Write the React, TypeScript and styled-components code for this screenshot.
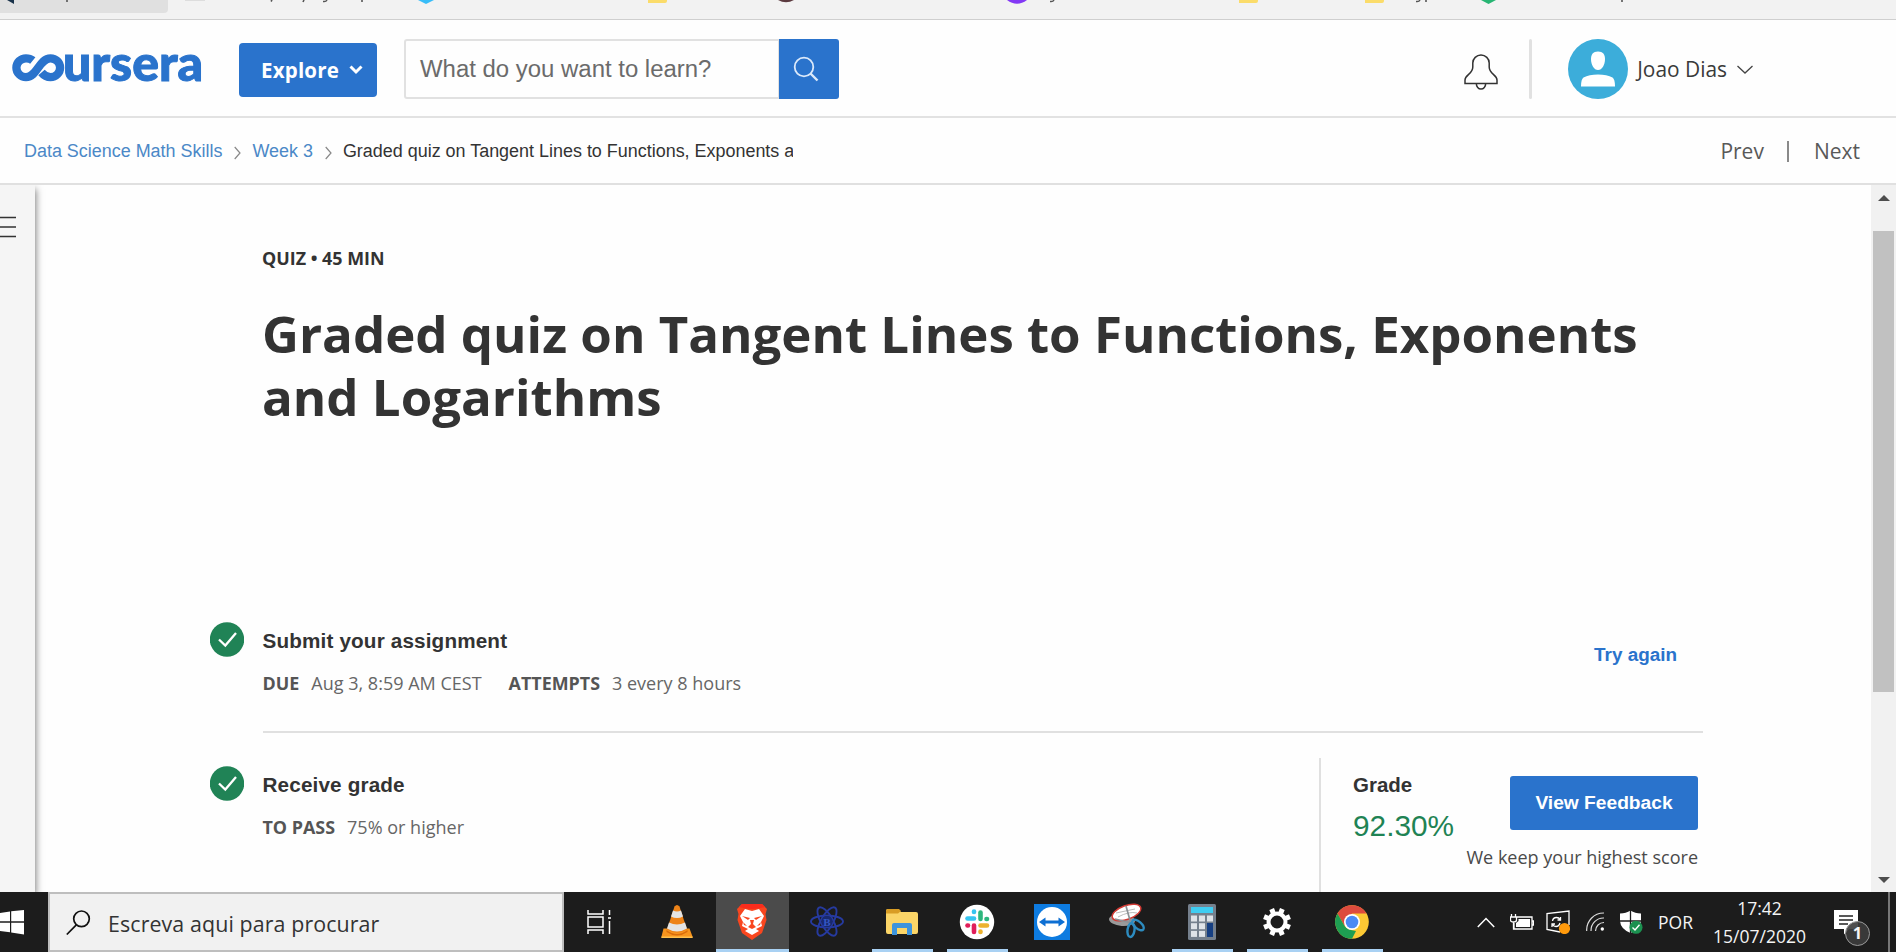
import React from "react";
import styled, { createGlobalStyle } from "styled-components";

const arial = '"Liberation Sans", Arial, sans-serif';
const open = '"Open Sans", "Noto Sans", sans-serif';
const blue = "#2a73cc";

const Global = createGlobalStyle`
  * { box-sizing: border-box; }
  body { margin: 0; background: #fff; overflow: hidden; }
  svg { display: block; flex: none; }
`;

const Screen = styled.div`
  width: 1896px;
  height: 952px;
  display: flex;
  flex-direction: column;
  background: #fefefe;
  overflow: hidden;
`;

/* Browser bookmarks */
const Bookmarks = styled.div`
  height: 20px;
  flex: none;
  background: #f2f2f2;
  border-bottom: 1px solid #cfcfcf;
`;

/* Site header */
const Header = styled.header`
  height: 98px;
  flex: none;
  display: flex;
  align-items: center;
  border-bottom: 2px solid #e2e2e2;
  padding: 2px 143px 0 12px;
`;
const Logo = styled.a`
  display: flex;
  width: 193px;
  margin-right: 34px;
  margin-top: -2px;
`;
const ExploreButton = styled.button`
  width: 138px;
  height: 54px;
  margin-top: 2px;
  border: 0;
  border-radius: 4px;
  background: ${blue};
  color: #fff;
  font: 700 20.5px ${open};
  letter-spacing: 0.2px;
  display: flex;
  align-items: center;
  justify-content: space-between;
  padding: 0 14px 0 22px;
`;
const Search = styled.form`
  display: flex;
  width: 435px;
  height: 60px;
  margin-left: 27px;
`;
const SearchField = styled.div`
  flex: 1;
  border: 2px solid #e1e1e1;
  border-right-width: 1px;
  border-radius: 3px 0 0 3px;
  display: flex;
  align-items: center;
  padding-left: 14px;
  font: 23.95px ${arial};
  color: #6b6b6b;
`;
const SearchButton = styled.button`
  width: 60px;
  border: 0;
  border-radius: 0 3px 3px 0;
  background: ${blue};
  padding: 0 0 0 14px;
`;
const HeaderRight = styled.div`
  display: flex;
  align-items: center;
  margin-left: auto;
`;
const HeaderRule = styled.div`
  width: 3px;
  height: 60px;
  border-radius: 2px;
  background: #e1e1e1;
  margin: 0 36px 0 31px;
`;
const UserName = styled.span`
  font: 20.9px ${open};
  color: #3a3a3a;
  margin: 0 10px 0 9px;
  white-space: nowrap;
`;

/* Breadcrumb bar */
const CrumbBar = styled.nav`
  height: 67px;
  flex: none;
  display: flex;
  align-items: center;
  border-bottom: 2px solid #e0e0e0;
  padding: 2px 36px 0 24px;
  font: 17.95px ${arial};
  white-space: nowrap;
`;
const CrumbLink = styled.a`
  color: #4b88c7;
`;
const CrumbArrow = styled.svg`
  margin: 3px 11px 0 12px;
`;
const CrumbCurrent = styled.span`
  width: 450px;
  overflow: hidden;
  color: #333;
`;
const Pager = styled.div`
  margin: -2px 0 0 auto;
  display: flex;
  align-items: center;
  font: 21px ${open};
  color: #595959;
`;
const PagerRule = styled.i`
  width: 2px;
  height: 21px;
  margin: 2px 25px 0 23px;
  background: #8a8a8a;
`;

/* Page body */
const Body = styled.div`
  flex: 1;
  min-height: 0;
  display: flex;
`;
const SideRail = styled.aside`
  width: 35px;
  background: #f5f5f5;
  box-shadow: 1px 4px 7px rgba(0, 0, 0, 0.5);
  clip-path: inset(0 -12px 0 0);
  padding-top: 31px;
`;
const Content = styled.main`
  flex: 1;
  min-width: 0;
  padding: 61px 0 0 228px;
  color: #333;
  overflow: hidden;
`;
const Kind = styled.div`
  margin-left: -1px;
  font: 700 17.9px/24px ${open};
`;
const Title = styled.h1`
  width: 1440px;
  margin: 32px 0 0 -1px;
  font: 700 51px/63px ${open};
`;
const Steps = styled.section`
  width: 1493px;
  margin: 194px 0 0 -53px;
`;
const Step = styled.div<{ $offset?: number }>`
  display: flex;
  padding-top: ${(p) => p.$offset ?? 0}px;
`;
const StepIcon = styled.svg`
  margin-right: 19px;
`;
const StepMain = styled.div<{ $ruled?: boolean }>`
  flex: 1;
  display: flex;
  justify-content: space-between;
  height: ${(p) => (p.$ruled ? "111px" : "126px")};
  border-bottom: ${(p) => (p.$ruled ? "2px solid #e0e0e0" : "0")};
`;
const StepText = styled.div`
  padding-top: 7px;
  margin-left: -0.5px;
`;
const StepTitle = styled.h2`
  margin: 0 0 18px;
  font: 700 20.7px/24px ${arial};
  letter-spacing: 0.15px;
`;
const Meta = styled.div`
  display: flex;
  font: 18.02px/24px ${open};
  color: #666;
  white-space: nowrap;
`;
const MetaLabel = styled.b`
  font-size: 17.9px;
  color: #555;
  margin-right: 12px;
`;
const MetaValue = styled.span`
  margin-right: 27px;
`;
const TryAgain = styled.a`
  margin: 21px 26px 0 0;
  font: 700 18.9px/24px ${arial};
  color: ${blue};
`;
const GradePanel = styled.div`
  display: flex;
  width: 384px;
  margin-top: -8px;
  padding: 0 5px 0 32px;
  border-left: 2px solid #e0e0e0;
`;
const GradeBlock = styled.div`
  padding-top: 15px;
  width: 113px;
`;
const GradeTitle = styled.div`
  font: 700 20.5px/24px ${arial};
`;
const GradeValue = styled.div`
  font: 29.8px/36px ${arial};
  color: #1f8354;
  margin-top: 11px;
`;
const FeedbackBlock = styled.div`
  flex: 1;
  display: flex;
  flex-direction: column;
  align-items: flex-end;
  padding-top: 18px;
`;
const FeedbackButton = styled.button`
  width: 188px;
  height: 54px;
  padding: 0;
  border: 0;
  border-radius: 3px;
  background: ${blue};
  color: #fff;
  font: 700 19.2px ${arial};
`;
const FeedbackNote = styled.div`
  margin-top: 15px;
  font: 18.02px/24px ${open};
  color: #4a4a4a;
  white-space: nowrap;
`;
const Scrollbar = styled.div`
  width: 25px;
  background: #f1f1f1;
  display: flex;
  flex-direction: column;
  align-items: center;
  padding: 10px 0 9px;
`;
const ScrollThumb = styled.div`
  width: 21px;
  height: 461px;
  margin: 30px 0 auto;
  background: #c1c1c1;
`;

/* Desktop taskbar */
const Taskbar = styled.footer`
  height: 60px;
  flex: none;
  display: flex;
  background: #1c1c1c;
  color: #f4f4f4;
  font-family: ${open};
`;
const StartButton = styled.div`
  width: 48px;
  padding-top: 18px;
`;
const TaskSearch = styled.div`
  width: 516px;
  background: #f1f1f1;
  border: 2px solid #bebebe;
  display: flex;
  padding: 16px 0 0 16px;
`;
const TaskSearchText = styled.span`
  margin: 0 0 0 17px;
  font-size: 21.4px;
  line-height: 28px;
  letter-spacing: 0.1px;
  color: #333;
`;
const Apps = styled.div`
  display: flex;
  gap: 2px;
  padding-left: 2px;
`;
const AppSlot = styled.div<{ $open?: boolean; $active?: boolean }>`
  width: 73px;
  display: flex;
  flex-direction: column;
  align-items: center;
  justify-content: space-between;
  background: ${(p) => (p.$active ? "#4b4b4b" : "transparent")};
  svg { margin-right: 2px; }
  &::after {
    content: "";
    height: 3px;
    width: ${(p) => (p.$active ? 73 : 61)}px;
    background: ${(p) => (p.$open || p.$active ? "#a9d1f3" : "transparent")};
  }
`;
const Tray = styled.div`
  margin-left: auto;
  display: flex;
  align-items: center;
`;
const TrayIcon = styled.svg<{ $gap: number }>`
  margin-right: ${(p) => p.$gap}px;
`;
const Language = styled.span`
  width: 35px;
  font-size: 17.5px;
  margin-right: 20px;
`;
const Clock = styled.div`
  width: 93px;
  margin-right: 28px;
  text-align: center;
  font-size: 17.5px;
  line-height: 28px;
  white-space: nowrap;
`;
const Notifications = styled.div`
  position: relative;
  width: 39px;
  height: 60px;
  padding-top: 18px;
  margin-right: 15px;
`;
const Badge = styled.span`
  position: absolute;
  left: 11px;
  top: 29px;
  width: 25px;
  height: 25px;
  border: 1.5px solid #999;
  border-radius: 50%;
  background: #3d3d3de8;
  font: 700 16.5px/21px ${open};
  text-align: center;
`;
const ShowDesktop = styled.div`
  width: 8px;
  height: 60px;
  border-left: 2px solid #777;
`;

const BookmarkRemnants = () => (
  <svg width="1896" height="19" viewBox="0 0 1896 19">
    <path d="M0 0H168V9Q168 13 164 13H0Z" fill="#e0e0e0" />
    <path d="M7 0L14 4V0Z" fill="#19324a" />
    <path d="M185 0H205" stroke="#ddd" strokeWidth="2" />
    <path d="M67 0V2M272 0L271 1.5M304 0L303 2M362 0V2M1426 0V2M1622 0V2" stroke="#555" strokeWidth="1.6" />
    <path d="M323 1.5Q326 2 327 0M1050 1.5Q1053 2 1054 0M1416 1.5Q1419 2 1420 0" stroke="#555" strokeWidth="1.5" fill="none" />
    <path d="M418 0L426 4L434 0Z" fill="#38bdf8" />
    <path d="M648 0H667V1Q667 3 665 3H648ZM1239 0H1258V1Q1258 3 1256 3H1239ZM1365 0H1384V1Q1384 3 1382 3H1365Z" fill="#fbdc6a" />
    <path d="M778 0Q786 4.5 794 0Z" fill="#5c3b40" />
    <path d="M1007 0Q1017 7.5 1027 0Z" fill="#8338f5" />
    <path d="M1481 0L1488.500 4L1496 0Z" fill="#27b573" />
  </svg>
);

const CourseraLogo = () => (
  <svg width="193" height="44" viewBox="0 0 193 44" role="img" aria-label="coursera">
    <path
      d="M20.800 14.600C18.700 12.900 16.600 12.300 14 12.300A9.600 9.400 0 0 0 14 31.100C25.500 31.100 27 12.300 38.500 12.300A9.600 9.400 0 0 1 38.500 31.100C34.500 31.100 32 29.500 29.500 26.500"
      fill="none"
      stroke={blue}
      strokeWidth="8.300"
    />
    <text x="51" y="34.500" textLength="140" lengthAdjust="spacingAndGlyphs" fill={blue} stroke={blue} strokeWidth="1" fontFamily="Lato" fontWeight="900" fontSize="48.500">
      ursera
    </text>
  </svg>
);

const Check = () => (
  <StepIcon width="34" height="36" viewBox="0 0 34 36">
    <circle cx="17" cy="17.500" r="17.200" fill="#208356" />
    <path d="M9 17.500L15.300 23.500L26 11" fill="none" stroke="#fff" strokeWidth="2.300" />
  </StepIcon>
);

const Arrow = () => (
  <CrumbArrow width="7" height="14" viewBox="0 0 7 14">
    <path d="M0.700 1L6 7L0.700 13" fill="none" stroke="#888" strokeWidth="1.200" />
  </CrumbArrow>
);

const Vlc = () => (
  <>
    <path d="M9 31.500H35L38 39.500V41H7V39.500Z" transform="translate(7.500 -1)" fill="#f7941d" />
    <path d="M7 40.500H38V42H7Z" transform="translate(7.500 -2)" fill="#ffc04d" />
    <path d="M20 31.500Q30 38 40 31.500L32.500 8.500Q30 5.500 27.500 8.500Z" fill="#ee8318" />
    <path d="M26 13.500Q30 15.500 34 13.500L36 19.500Q30 22.500 24 19.500ZM22 25.500Q30 29.500 38 25.500L40 31.500Q30 37.500 20 31.500Z" transform="translate(0 -1)" fill="#e4e4e4" />
    <path d="M19.500 32Q30 40 40.500 32V34Q30 41 19.500 34Z" fill="#d96c0b" />
  </>
);

const Brave = () => (
  <>
    <path d="M20 5H40L45 10L43.500 15L44.500 21L40 34L30 41L20 34L15.500 21L16.500 15L15 10Z" fill="#f9461f" />
    <path d="M20 5H40L43 8Q36 10 30 10T17 8Z" fill="#fb2c1c" />
    <path d="M23 10L30 12L37 10L42 17L39 23L40 27L34 30L37 32L30 36L23 32L26 30L20 27L21 23L18 17Z" fill="#fff" />
    <path d="M20 17L28 19L26 21ZM40 17L32 19L34 21ZM28 21H32L31 25L34 28L30 30L26 28L29 25ZM21 23L25 27L22 26ZM39 23L35 27L38 26Z" fill="#f9461f" />
  </>
);

const Atom = () => (
  <g fill="none" stroke="#263a9f" strokeWidth="1.900">
    <ellipse cx="30" cy="29.500" rx="16" ry="6" />
    <ellipse cx="30" cy="29.500" rx="16" ry="6" transform="rotate(60 30 29.500)" />
    <ellipse cx="30" cy="29.500" rx="16" ry="6" transform="rotate(120 30 29.500)" />
    <circle cx="30" cy="29.500" r="5.500" fill="#19296f" stroke="none" />
    <text x="30" y="33.500" textAnchor="middle" fontFamily="Liberation Serif" fontWeight="700" fontSize="11" fill="#3457c4" stroke="none">B</text>
  </g>
);

const Folder = () => (
  <>
    <path d="M14 19Q14 17 16 17H26L29 20H44Q46 20 46 22V40Q46 42 44 42H16Q14 42 14 40Z" fill="#fbd567" />
    <path d="M14 19Q14 17 16 17H27L29 19L26 21.500H14Z" fill="#d99d24" />
    <path d="M20 43V33Q20 31 22 31H38Q40 31 40 33V43H35V36H25V43Z" fill="#3d94dd" />
  </>
);

const Slack = () => (
  <>
    <circle cx="30" cy="30" r="17.200" fill="#fff" />
    <g strokeWidth="4.600" strokeLinecap="round">
      <path d="M20.500 26.500H27" stroke="#36c5f0" />
      <path d="M27 19.500V20" stroke="#36c5f0" />
      <path d="M33.500 20.500V27" stroke="#2eb67d" />
      <path d="M40 27H39.500" stroke="#2eb67d" />
      <path d="M33.500 33.500H40" stroke="#ecb22e" />
      <path d="M33.500 40V39.500" stroke="#ecb22e" />
      <path d="M27 33.500V40" stroke="#e01e5a" />
      <path d="M20.500 33.500H21" stroke="#e01e5a" />
    </g>
  </>
);

const TeamViewer = () => (
  <>
    <rect x="12" y="12" width="36" height="36" fill="#0d7be0" />
    <circle cx="30" cy="30" r="15" fill="#fff" />
    <path d="M17 30L23.500 25.500V28.500H36.500V25.500L43 30L36.500 34.500V31.500H23.500V34.500Z" fill="#0d6fd3" />
  </>
);

const Snip = () => (
  <>
    <ellipse cx="25" cy="28" rx="13" ry="6" transform="rotate(4 25 28)" fill="#9a9a9a" />
    <ellipse cx="29.500" cy="20.500" rx="15" ry="7" transform="rotate(-20 29.500 20.500)" fill="#fff" stroke="#d23b35" strokeWidth="1.500" />
    <path d="M19 21L38 17M21 25Q32 19 40 21" stroke="#bbb" fill="none" />
    <path d="M29 14L34 32M18 27L35 31" stroke="#8c9296" strokeWidth="1.700" />
    <ellipse cx="34" cy="38" rx="3.500" ry="7" transform="rotate(8 34 38)" fill="none" stroke="#2d8cc0" strokeWidth="2.400" />
    <ellipse cx="41" cy="33" rx="3.500" ry="7" transform="rotate(-50 41 33)" fill="none" stroke="#2d8cc0" strokeWidth="2.400" />
  </>
);

const Calculator = () => (
  <>
    <rect x="16" y="12" width="28" height="36" rx="1.500" fill="#75808d" />
    <rect x="19" y="15" width="22" height="6" fill="#3fcdf2" />
    {[0, 1, 2].map((r) =>
      [0, 1, 2].map((c) => (
        <rect key={`${r}${c}`} x={19 + c * 8} y={23.5 + r * 7.7} width="6" height="6" fill={c === 2 && r > 0 ? "#163f82" : "#dfe3e8"} />
      ))
    )}
    <rect x="35" y="31" width="6" height="14" fill="#163f82" />
  </>
);

const Gear = () => (
  <g fill="none" stroke="#fff">
    <circle cx="30" cy="30" r="8.500" strokeWidth="4" />
    {[22.5, 67.5, 112.5, 157.5, 202.5, 247.5, 292.5, 337.5].map((a) => (
      <path key={a} d="M30 21V16" strokeWidth="5" transform={`rotate(${a} 30 30)`} />
    ))}
  </g>
);

const Chrome = () => (
  <>
    <circle cx="30" cy="30" r="16.800" fill="#fcc934" />
    <path d="M15.450 21.600A16.800 16.800 0 0 1 44.550 21.600H30L22.500 34Z" fill="#dd4b3e" />
    <path d="M15.450 21.600L22.600 34Q26 38 30 38.200L34 39L30 46.800A16.800 16.800 0 0 1 15.450 21.600Z" fill="#1e9e52" />
    <circle cx="30" cy="30" r="8" fill="#fff" />
    <circle cx="30" cy="30" r="6.300" fill="#4a8af4" />
  </>
);

const TaskView = () => (
  <path d="M16 18V22H31V18M16 42V38H31V42M16 25H31V35H16ZM37.500 18V23M37.500 29V42M36 26H39" fill="none" stroke="#fff" strokeWidth="1.500" />
);

const apps: { name: string; Icon: () => React.JSX.Element; open?: boolean; active?: boolean; lift?: number }[] = [
  { name: "task view", Icon: TaskView },
  { name: "vlc", Icon: Vlc, lift: 6 },
  { name: "brave", Icon: Brave, active: true, lift: 7 },
  { name: "atom", Icon: Atom },
  { name: "files", Icon: Folder, open: true },
  { name: "slack", Icon: Slack, open: true },
  { name: "teamviewer", Icon: TeamViewer },
  { name: "snip", Icon: Snip },
  { name: "calculator", Icon: Calculator, open: true },
  { name: "settings", Icon: Gear, open: true },
  { name: "chrome", Icon: Chrome, open: true },
];

export default function App() {
  return (
    <Screen>
      <Global />
      <Bookmarks>
        <BookmarkRemnants />
      </Bookmarks>

      <Header>
        <Logo>
          <CourseraLogo />
        </Logo>
        <ExploreButton>
          Explore
          <svg width="14" height="10" viewBox="0 0 14 10">
            <path d="M1.500 1.500L7 7L12.500 1.500" fill="none" stroke="#fff" strokeWidth="3" />
          </svg>
        </ExploreButton>
        <Search>
          <SearchField>What do you want to learn?</SearchField>
          <SearchButton type="button">
            <svg width="26" height="26" viewBox="0 0 26 26">
              <circle cx="11" cy="11" r="9.300" fill="none" stroke="#dbe9fa" strokeWidth="1.800" />
              <path d="M17.500 17.500L24.500 24.500" stroke="#dbe9fa" strokeWidth="2.400" />
            </svg>
          </SearchButton>
        </Search>
        <HeaderRight>
          <svg width="34" height="43" viewBox="0 0 34 43">
            <path
              transform="translate(0 6)"
              d="M1 29.500V26C1 21 8.800 20 8.800 13V9A8.200 8 0 0 1 25.200 9V13C25.200 20 33 21 33 26V29.500ZM12.300 29.500A4.700 5.500 0 0 0 21.700 29.500"
              fill="none"
              stroke="#333"
              strokeWidth="1.500"
            />
          </svg>
          <HeaderRule />
          <svg width="60" height="60" viewBox="0 0 60 60">
            <circle cx="30" cy="30" r="30" fill="#3cadda" />
            <path d="M30 12.500C25 12.500 23 15.500 23 20C23 26 26 31 30 31S37 26 37 20C37 15.500 35 12.500 30 12.500Z" fill="#fff" />
            <path d="M13 47.500Q13 40 15.500 38.500Q21 35.500 30 35.500T44.500 38.500Q47 40 47 47.500Z" fill="#fff" />
          </svg>
          <UserName>Joao Dias</UserName>
          <svg width="16" height="9" viewBox="0 0 16 9">
            <path d="M0.500 1L8 8L15.500 1" fill="none" stroke="#444" strokeWidth="1.300" />
          </svg>
        </HeaderRight>
      </Header>

      <CrumbBar>
        <CrumbLink>Data Science Math Skills</CrumbLink>
        <Arrow />
        <CrumbLink>Week 3</CrumbLink>
        <Arrow />
        <CrumbCurrent>Graded quiz on Tangent Lines to Functions, Exponents and Logarithms</CrumbCurrent>
        <Pager>
          <span>Prev</span>
          <PagerRule />
          <span>Next</span>
        </Pager>
      </CrumbBar>

      <Body>
        <SideRail>
          <svg width="16" height="22" viewBox="0 0 16 22">
            <path d="M0 1.500H16M0 11H16M0 20.500H16" stroke="#333" strokeWidth="1.500" />
          </svg>
        </SideRail>
        <Content>
          <Kind>QUIZ • 45 MIN</Kind>
          <Title>Graded quiz on Tangent Lines to Functions, Exponents and Logarithms</Title>
          <Steps>
            <Step>
              <Check />
              <StepMain $ruled>
                <StepText>
                  <StepTitle>Submit your assignment</StepTitle>
                  <Meta>
                    <MetaLabel>DUE</MetaLabel>
                    <MetaValue>Aug 3, 8:59 AM CEST</MetaValue>
                    <MetaLabel>ATTEMPTS</MetaLabel>
                    <MetaValue>3 every 8 hours</MetaValue>
                  </Meta>
                </StepText>
                <TryAgain>Try again</TryAgain>
              </StepMain>
            </Step>
            <Step $offset={33}>
              <Check />
              <StepMain>
                <StepText>
                  <StepTitle>Receive grade</StepTitle>
                  <Meta>
                    <MetaLabel>TO PASS</MetaLabel>
                    <MetaValue>75% or higher</MetaValue>
                  </Meta>
                </StepText>
                <GradePanel>
                  <GradeBlock>
                    <GradeTitle>Grade</GradeTitle>
                    <GradeValue>92.30%</GradeValue>
                  </GradeBlock>
                  <FeedbackBlock>
                    <FeedbackButton>View Feedback</FeedbackButton>
                    <FeedbackNote>We keep your highest score</FeedbackNote>
                  </FeedbackBlock>
                </GradePanel>
              </StepMain>
            </Step>
          </Steps>
        </Content>
        <Scrollbar>
          <svg width="12" height="6" viewBox="0 0 12 6">
            <path d="M0 6L6 0L12 6Z" fill="#4d4d4d" />
          </svg>
          <ScrollThumb />
          <svg width="12" height="6" viewBox="0 0 12 6">
            <path d="M0 0L6 6L12 0Z" fill="#4d4d4d" />
          </svg>
        </Scrollbar>
      </Body>

      <Taskbar>
        <StartButton>
          <svg width="25" height="25" viewBox="0 0 25 25">
            <path d="M0 3L10 1.500V11.300H0ZM11.200 1.300L24 0V11.300H11.200ZM0 12.700H10V22.300L0 21ZM11.200 12.700H24V24.500L11.200 22.500Z" fill="#fff" />
          </svg>
        </StartButton>
        <TaskSearch>
          <svg width="25" height="26" viewBox="0 0 25 26">
            <circle cx="15.500" cy="8.800" r="7.800" fill="none" stroke="#111" strokeWidth="1.700" />
            <path d="M10.300 14.800L0.800 24.500" stroke="#111" strokeWidth="1.700" />
          </svg>
          <TaskSearchText>Escreva aqui para procurar</TaskSearchText>
        </TaskSearch>
        <Apps>
          {apps.map(({ name, Icon, open: isOpen, active, lift = 0 }) => (
            <AppSlot key={name} $open={isOpen} $active={active}>
              <svg width="60" height="57" viewBox={`0 ${-lift} 60 57`}>
                <Icon />
              </svg>
            </AppSlot>
          ))}
        </Apps>
        <Tray>
          <TrayIcon $gap={15} width="18" height="11" viewBox="0 0 18 11">
            <path d="M0.800 10L9 1.500L17.200 10" fill="none" stroke="#fff" strokeWidth="1.500" />
          </TrayIcon>
          <TrayIcon $gap={12} width="24" height="18" viewBox="0 0 24 18">
            <path d="M6 4H22V16H4V10M22 8H23.500V12H22M1.500 1V4M5.500 1V4M0.500 4H6.500V7Q6.500 9 3.500 9T0.500 7ZM3.500 9V16H6" fill="none" stroke="#fff" strokeWidth="1.300" />
            <path d="M8.500 6H20V14H6V10L8.500 8Z" fill="#fff" />
          </TrayIcon>
          <TrayIcon $gap={16} width="24" height="24" viewBox="0 0 24 24">
            <path d="M14 22L1 19.500V3.500L23 1V15" fill="none" stroke="#fff" strokeWidth="1.300" />
            <path d="M6.500 11Q7 7.500 10.500 7.500Q13 7.500 14 9.500M14.500 7V10H11.500M14 13Q13 16.500 10 16.500Q7.500 16.500 6.500 14.500M6 17V14H9" fill="none" stroke="#fff" strokeWidth="1.300" />
            <circle cx="18.500" cy="18.500" r="5.600" fill="#ff9a0c" />
          </TrayIcon>
          <TrayIcon $gap={14} width="19" height="20" viewBox="0 0 19 20">
            <g fill="none" stroke="#ddd" strokeWidth="1.200">
              <path d="M0.700 19A17 17 0 0 1 18 1" />
              <path d="M5 19A12.500 12.500 0 0 1 18 6" />
              <path d="M9.500 19A8.500 8.500 0 0 1 18 10.500" />
            </g>
            <circle cx="16.300" cy="17" r="1.700" fill="#fff" />
          </TrayIcon>
          <TrayIcon $gap={15} width="24" height="24" viewBox="0 0 24 24">
            <path d="M11.500 0.500Q16 3.500 22 3.500V11Q21.500 19 11.500 23Q1.500 19 1 11V3.500Q7 3.500 11.500 0.500Z" fill="#fff" />
            <path d="M11.500 0V23M0 11H22" stroke="#1c1c1c" strokeWidth="1.300" />
            <circle cx="17" cy="17.300" r="6.500" fill="#1b9150" />
            <path d="M13.500 17.500L16 20L20.500 14.800" fill="none" stroke="#fff" strokeWidth="1.400" />
          </TrayIcon>
          <Language>POR</Language>
          <Clock>
            17:42
            <br />
            15/07/2020
          </Clock>
          <Notifications>
            <svg width="25" height="26" viewBox="0 0 25 26">
              <path d="M0 0H24V19H15L10 24.500V19H0Z" fill="#fff" />
              <path d="M5 6H19M5 10H19M5 14H14" stroke="#222" strokeWidth="1.300" />
            </svg>
            <Badge>1</Badge>
          </Notifications>
          <ShowDesktop />
        </Tray>
      </Taskbar>
    </Screen>
  );
}
